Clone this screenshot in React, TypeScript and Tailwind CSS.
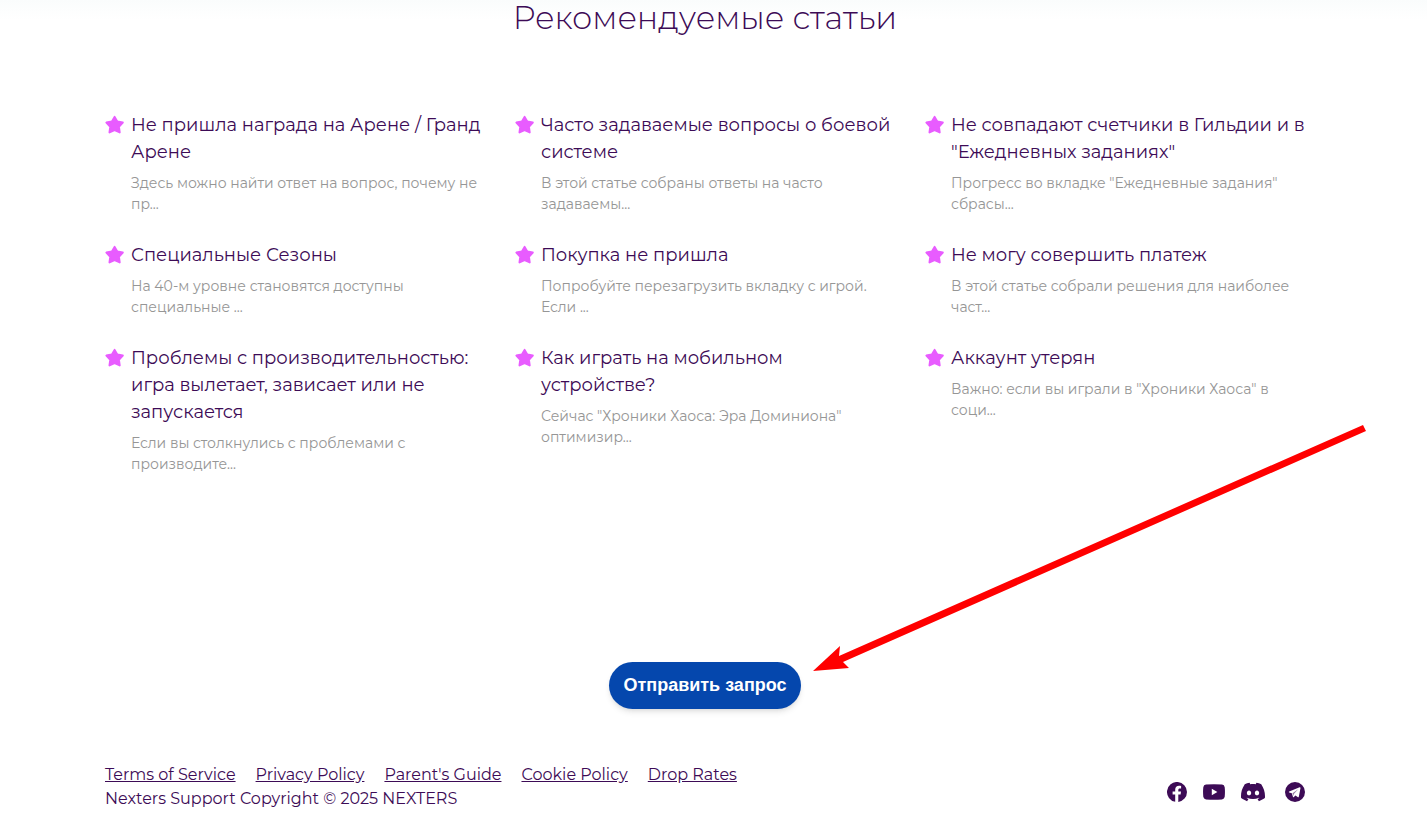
import type { ReactNode } from "react"
import { SiDiscord } from "react-icons/si"

type Article = {
  title: string
  excerpt: string
}

type Social = {
  icon: ReactNode
  label: string
}

const articles: Article[] = [
  {
    title: "Не пришла награда на Арене / Гранд Арене",
    excerpt: "Здесь можно найти ответ на вопрос, почему не пр...",
  },
  {
    title: "Часто задаваемые вопросы о боевой системе",
    excerpt: "В этой статье собраны ответы на часто задаваемы...",
  },
  {
    title: "Не совпадают счетчики в Гильдии и в \"Ежедневных заданиях\"",
    excerpt: "Прогресс во вкладке \"Ежедневные задания\" сбрасы...",
  },
  { title: "Специальные Сезоны", excerpt: "На 40-м уровне становятся доступны специальные ..." },
  { title: "Покупка не пришла", excerpt: "Попробуйте перезагрузить вкладку с игрой. Если ..." },
  { title: "Не могу совершить платеж", excerpt: "В этой статье собрали решения для наиболее част..." },
  {
    title: "Проблемы с производительностью: игра вылетает, зависает или не запускается",
    excerpt: "Если вы столкнулись с проблемами с производите...",
  },
  {
    title: "Как играть на мобильном устройстве?",
    excerpt: "Сейчас \"Хроники Хаоса: Эра Доминиона\" оптимизир...",
  },
  { title: "Аккаунт утерян", excerpt: "Важно: если вы играли в \"Хроники Хаоса\" в соци..." },
]

const footerLinks = ["Terms of Service", "Privacy Policy", "Parent's Guide", "Cookie Policy", "Drop Rates"]

function FacebookIcon() {
  return (
    <svg viewBox="0 0 20 20" className="size-5" fill="currentColor" aria-hidden>
      <path d="M20 10A10 10 0 1 0 8.2 19.8V12.6H5.6V9.6H8.2V7.7C8.2 5.1 9.7 3.8 12 3.8 13.1 3.8 14.1 4 14.1 4V6.5H12.9C11.7 6.5 11.3 7.2 11.3 8V9.6H14L13.6 12.6H11.3V19.9A10 10 0 0 0 20 10Z" />
    </svg>
  )
}

function YoutubeIcon() {
  return (
    <svg viewBox="0 0 22 16" className="h-4 w-[22px]" fill="currentColor" aria-hidden>
      <path
        fillRule="evenodd"
        d="M3 .6Q11 0 19 .6 21.4.9 21.7 3.2 22.2 8 21.7 12.8 21.4 15.1 19 15.4 11 16 3 15.4.6 15.1.3 12.8-.2 8 .3 3.2.6.9 3 .6ZM8.8 4.7V11.3L14.4 8Z"
      />
    </svg>
  )
}

function TelegramIcon() {
  return (
    <svg viewBox="0 0 20 20" className="ml-1 size-5" aria-hidden>
      <circle cx="10" cy="10" r="10" fill="currentColor" />
      <path d="M14.6 5.3 4.2 9.5Q3.3 10 4.2 10.4L6.8 11.3 8 14.9Q8.4 15.4 8.9 15L10.4 13.6 13 15.3Q13.6 15.5 13.8 14.8L15.5 6Q15.5 5 14.6 5.3Z" fill="#fff" />
      <path d="M13.2 7.2 7.5 11.2 8.5 13.9 8.8 12Z" fill="currentColor" fillOpacity="0.55" />
    </svg>
  )
}

const socials: Social[] = [
  { icon: <FacebookIcon />, label: "Facebook" },
  { icon: <YoutubeIcon />, label: "YouTube" },
  { icon: <SiDiscord className="size-6" aria-hidden />, label: "Discord" },
  { icon: <TelegramIcon />, label: "Telegram" },
]

function Star() {
  return (
    <svg viewBox="0 0 20 20" className="mt-[3px] size-5 shrink-0" fill="#e85cff" stroke="#e85cff" strokeWidth="2" strokeLinejoin="round" aria-hidden>
      <path d="M9.6 1.9 12.3 6.6 17.8 7.6 13.9 11.7 14.7 17.4 9.6 15.2 4.5 17.4 5.3 11.7 1.4 7.6 6.9 6.6Z" />
    </svg>
  )
}

function ArticleCard({ title, excerpt }: Article) {
  return (
    <article className="flex gap-1.5">
      <Star />
      <div className="min-w-0">
        <h3 className="text-lg leading-[27px]">
          <a href="#">{title}</a>
        </h3>
        <p className="mt-[7px] text-sm leading-[21px] text-[#969696]">{excerpt}</p>
      </div>
    </article>
  )
}

function Arrow() {
  return (
    <svg
      viewBox="0 0 556 250"
      className="pointer-events-none absolute -top-[238px] left-[203px] h-[250px] w-[556px]"
      fill="#ff0000"
      aria-hidden
    >
      <path d="M1 247 28 222 27 232 551 1 554 7 31 238 37 244Z" />
    </svg>
  )
}

export default function App() {
  return (
    <div className="bg-white bg-linear-to-b from-[#fafcfc] to-white to-[20px] pr-[17px] font-['Montserrat',sans-serif] text-[#3d0b56]">
      <div className="mx-auto max-w-[1200px]">
        <section>
          <h2 className="text-center text-[32px] leading-9 font-light">Рекомендуемые статьи</h2>
          <div className="mt-[76px] grid grid-cols-3 gap-x-[30px] gap-y-[27px]">
            {articles.map((article) => (
              <ArticleCard key={article.title} {...article} />
            ))}
          </div>
        </section>

        <div className="mt-[187px] flex justify-center">
          <div className="relative">
            <button
              type="button"
              className="h-[47px] rounded-full bg-[#0547ad] px-3.5 pb-0.5 font-['Liberation_Sans',Arial,sans-serif] text-lg font-bold text-white shadow-md"
            >
              Отправить запрос
            </button>
            <Arrow />
          </div>
        </div>

        <footer className="mt-[54px] flex items-center justify-between pb-2">
          <div className="text-base leading-6">
            <nav className="flex gap-5">
              {footerLinks.map((link) => (
                <a key={link} href="#" className="underline">
                  {link}
                </a>
              ))}
            </nav>
            <p>Nexters Support Copyright © 2025 NEXTERS</p>
          </div>
          <div className="mt-2.5 flex items-center gap-4">
            {socials.map(({ icon, label }) => (
              <a key={label} href="#" aria-label={label}>
                {icon}
              </a>
            ))}
          </div>
        </footer>
      </div>
    </div>
  )
}
